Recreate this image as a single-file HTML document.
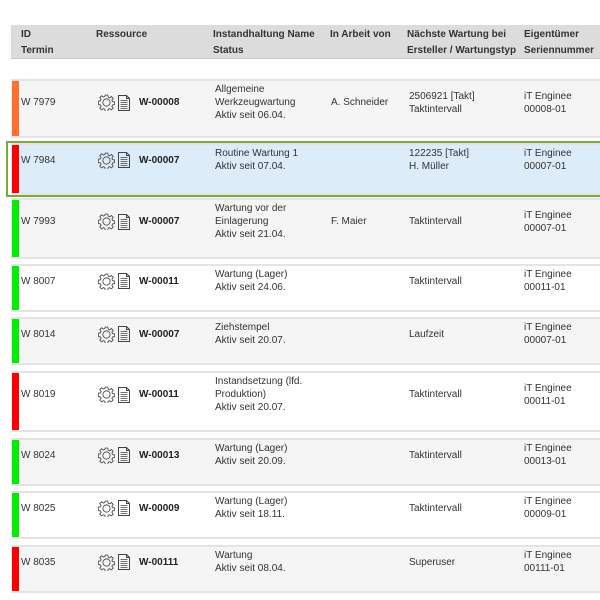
<!DOCTYPE html>
<html><head><meta charset="utf-8"><style>
body{margin:0;width:600px;height:600px;overflow:hidden;background:#fff;font-family:"Segoe UI","Liberation Sans",sans-serif;font-size:10px;color:#333}
.hdr{position:absolute;left:11px;top:25px;width:589px;height:33px;background:#dcdcdc;border-bottom:1px solid #c8c8c8;font-weight:bold;color:#333}
.hdr div{position:absolute;top:2px;line-height:16px;white-space:nowrap}
.row{position:absolute;left:11px;width:589px;box-sizing:border-box;border-top:2px solid #e4e4e4;border-bottom:2px solid #e4e4e4}
.g{background:#f5f5f6}.w{background:#fff}
.sel{background:#dcecf9}
.bar{position:absolute;left:1px;top:0;bottom:0;width:7px}
.c{position:absolute;top:2px;height:var(--h);display:flex;align-items:center;line-height:13px;white-space:nowrap}
.c.ic{gap:3px}
.code{font-weight:bold;color:#222;margin-left:6px}
</style></head><body>
<div class="hdr">
<div style="left:10px">ID<br>Termin</div>
<div style="left:85px">Ressource</div>
<div style="left:202px">Instandhaltung Name<br>Status</div>
<div style="left:319px">In Arbeit von</div>
<div style="left:396px">Nächste Wartung bei<br>Ersteller / Wartungstyp</div>
<div style="left:513px">Eigentümer<br>Seriennummer</div>
</div>
<div style="position:absolute;left:6px;top:141px;width:600px;height:56px;box-sizing:border-box;border:2px solid #7aab3a"></div>
<svg width="0" height="0" style="position:absolute"><defs>
<symbol id="gear" viewBox="0 0 16 16"><path fill="none" stroke="#555" stroke-width="0.9" d="M6.8 1h2.4l.4 2 1.3.6 1.7-1.2 1.7 1.7-1.2 1.7.6 1.3 2 .4v2.4l-2 .4-.6 1.3 1.2 1.7-1.7 1.7-1.7-1.2-1.3.6-.4 2H6.8l-.4-2-1.3-.6-1.7 1.2-1.7-1.7 1.2-1.7-.6-1.3-2-.4V6.8l2-.4.6-1.3-1.2-1.7 1.7-1.7 1.7 1.2 1.3-.6z"/><circle cx="8" cy="8" r="3.4" fill="none" stroke="#555" stroke-width="0.9"/></symbol>
<symbol id="doc" viewBox="0 0 12 16"><path fill="none" stroke="#444" stroke-width="1" d="M.5.5h8l3 3v12H.5z M8.5.5v3h3"/><path fill="none" stroke="#444" stroke-width="0.7" d="M2.5 5.5h7M2.5 7.5h7M2.5 9.5h7M2.5 11.5h7M2.5 13.5h7"/></symbol>
</defs></svg>
<div id="rows"></div>
<script>
const R=[
[79,59,'g','#ff7030','W 7979','W-00008',['Allgemeine','Werkzeugwartung','Aktiv seit 06.04.'],'A. Schneider',['2506921 [Takt]','Taktintervall'],['iT Enginee','00008-01']],
[143,52,'sel','#ff0000','W 7984','W-00007',['Routine Wartung 1','Aktiv seit 07.04.'],'',['122235 [Takt]','H. Müller'],['iT Enginee','00007-01']],
[198,61,'g','#00ee00','W 7993','W-00007',['Wartung vor der','Einlagerung','Aktiv seit 21.04.'],'F. Maier',['Taktintervall'],['iT Enginee','00007-01']],
[264,48,'w','#00ee00','W 8007','W-00011',['Wartung (Lager)','Aktiv seit 24.06.'],'',['Taktintervall'],['iT Enginee','00011-01']],
[317,48,'g','#00ee00','W 8014','W-00007',['Ziehstempel','Aktiv seit 20.07.'],'',['Laufzeit'],['iT Enginee','00007-01']],
[371,61,'w','#ff0000','W 8019','W-00011',['Instandsetzung (lfd.','Produktion)','Aktiv seit 20.07.'],'',['Taktintervall'],['iT Enginee','00011-01']],
[438,48,'g','#00ee00','W 8024','W-00013',['Wartung (Lager)','Aktiv seit 20.09.'],'',['Taktintervall'],['iT Enginee','00013-01']],
[491,48,'w','#00ee00','W 8025','W-00009',['Wartung (Lager)','Aktiv seit 18.11.'],'',['Taktintervall'],['iT Enginee','00009-01']],
[545,48,'g','#ff0000','W 8035','W-00111',['Wartung','Aktiv seit 08.04.'],'',['Superuser'],['iT Enginee','00111-01']]];
let h='';
for(const r of R){const n=r[6].length,H=n*13;
h+=`<div class="row ${r[2]}" style="top:${r[0]}px;height:${r[1]}px;--h:${H}px"><div class="bar" style="background:${r[3]}"></div>
<div class="c" style="left:10px">${r[4]}</div>
<div class="c ic" style="left:87px"><svg width="17" height="17"><use href="#gear"/></svg><svg width="12" height="16"><use href="#doc"/></svg><span class="code">${r[5]}</span></div>
<div class="c" style="left:204px">${r[6].join('<br>')}</div>
<div class="c" style="left:320px">${r[7]}</div>
<div class="c" style="left:398px">${r[8].join('<br>')}</div>
<div class="c" style="left:513px">${r[9].join('<br>')}</div></div>`;}
document.getElementById('rows').innerHTML=h;
</script>
</body></html>
